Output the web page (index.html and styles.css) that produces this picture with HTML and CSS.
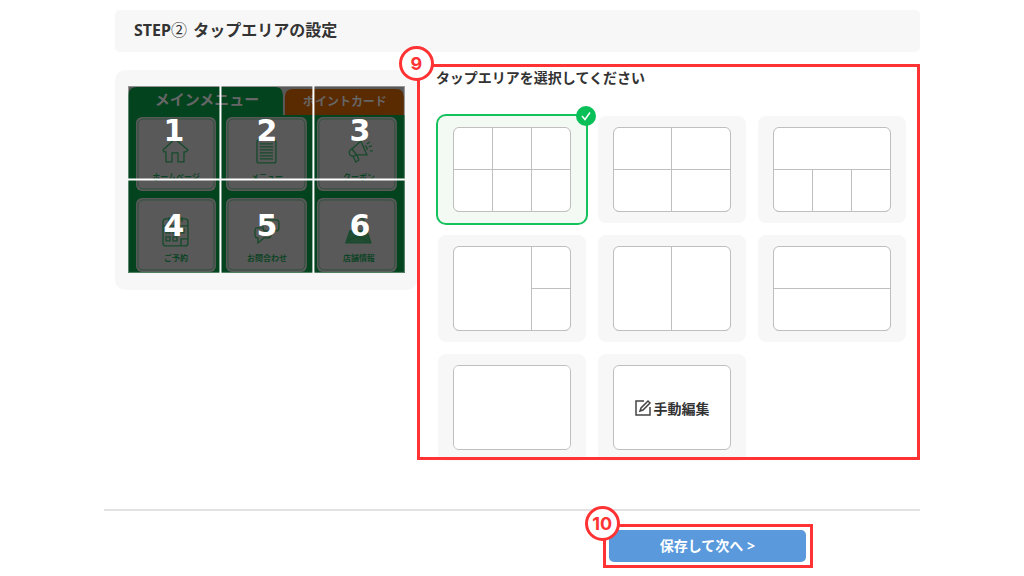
FILE: index.html
```html
<!DOCTYPE html>
<html lang="ja">
<head>
  <meta charset="UTF-8">
  <meta name="viewport" content="width=device-width, initial-scale=1">
  <title>タップエリアの設定</title>
  <link rel="stylesheet" href="styles.css">
</head>
<body>

<main>
  <h1 class="step-title">STEP<span class="step-number">②</span> タップエリアの設定</h1>

  <div class="columns">
    <!-- Menu preview with numbered areas -->
    <div class="preview">
      <svg viewBox="0 0 277 187" role="img" aria-label="リッチメニューのプレビュー">
        <rect width="277" height="187" fill="#595959"/>
        <path d="M0 187V9Q1 1 9 1H147Q155 1 155 9V29H277V187Z" fill="#03431e"/>
        <path d="M157 29V11Q157 3 165 3H268Q276 3 276 11V29Z" fill="#5a2a00"/>

        <g class="cards">
          <rect x="8" y="31" width="80" height="74" rx="6"/>
          <rect x="98" y="31" width="81" height="74" rx="6"/>
          <rect x="189" y="31" width="80" height="74" rx="6"/>
          <rect x="8" y="112" width="80" height="74" rx="6"/>
          <rect x="98" y="112" width="81" height="74" rx="6"/>
          <rect x="189" y="112" width="80" height="74" rx="6"/>
        </g>
        <g class="card-lines">
          <rect x="10" y="33" width="76" height="70" rx="5"/>
          <rect x="100" y="33" width="77" height="70" rx="5"/>
          <rect x="191" y="33" width="76" height="70" rx="5"/>
          <rect x="10" y="114" width="76" height="70" rx="5"/>
          <rect x="100" y="114" width="77" height="70" rx="5"/>
          <rect x="191" y="114" width="76" height="70" rx="5"/>
        </g>

        <g class="icons">
          <!-- home -->
          <path d="M35 64L47 53L60 64L58 66H56V76H50V67H44V76H38V66H36Z"/>
          <!-- list -->
          <rect x="129" y="54" width="19" height="23" rx="2"/>
          <path d="M132 58H145M132 61H145M132 64H145M132 67H145M132 70H145M132 73H145"/>
          <!-- megaphone -->
          <path d="M224 63L233 55L239 69L229 69M224 63A3.5 3.5 0 1 0 226 70L229 69ZM225 70L228 76L231 74L229 69M237 60A3 3 0 0 1 239 64M239 58L242 56M241 61L244 60M242 65H245"/>
          <!-- calendar -->
          <rect x="35" y="133" width="25" height="27" rx="3"/>
          <path d="M35 140H60M41 131V136M54 131V136M38 143H42V147H38ZM45 143H49V147H45ZM52 143H56V147H52ZM38 151H42V155H38ZM45 151H49V155H45ZM53 160V153H60"/>
          <!-- chat -->
          <path d="M134 142H129Q127 142 127 145V149Q127 152 130 152V157L136 152H140Q143 152 143 149M138 134H148Q151 134 151 137V142Q151 145 148 145H146L141 149V145H138Q135 145 135 142V137Q135 134 138 134Z"/>
          <!-- map -->
          <path d="M222 145H239L243 157H218Z" fill="#224b34"/>
          <path d="M220 155L229 150L240 155M230 152L225 143A7 7 0 1 1 236 143Z"/>
        </g>

        <text class="tab-main" x="79" y="19">メインメニュー</text>
        <text class="tab-sub" x="217" y="20">ポイントカード</text>
        <g class="captions">
          <text x="48" y="94">ホームページ</text>
          <text x="139" y="94">メニュー</text>
          <text x="231" y="94">クーポン</text>
          <text x="48" y="175">ご予約</text>
          <text x="139" y="175">お問合わせ</text>
          <text x="231" y="175">店舗情報</text>
        </g>

        <rect class="edge" x="0.5" y="0.5" width="276" height="186"/>
        <path class="divider" d="M92.5 0V187M185.5 0V187M0 93.5H277"/>
        <g class="numbers">
          <text x="46" y="55">1</text>
          <text x="139" y="55">2</text>
          <text x="232" y="55">3</text>
          <text x="46" y="150">4</text>
          <text x="139" y="150">5</text>
          <text x="232" y="150">6</text>
        </g>
      </svg>
    </div>

    <!-- Area layout picker -->
    <section class="picker callout">
      <span class="marker">9</span>
      <h2>タップエリアを選択してください</h2>
      <div class="tiles">
        <label class="tile">
          <input type="radio" name="layout" value="6" aria-label="6分割" checked>
          <span class="layout six"><i></i><i></i><i></i><i></i><i></i><i></i></span>
          <svg class="check" viewBox="0 0 20 20"><circle cx="10" cy="10" r="10"/><path d="M6 10L9 13.5L14 6.5"/></svg>
        </label>
        <label class="tile">
          <input type="radio" name="layout" value="4" aria-label="4分割">
          <span class="layout four"><i></i><i></i><i></i><i></i></span>
        </label>
        <label class="tile">
          <input type="radio" name="layout" value="1-3" aria-label="上1・下3分割">
          <span class="layout top-three"><i></i><i></i><i></i><i></i></span>
        </label>
        <label class="tile">
          <input type="radio" name="layout" value="1-2" aria-label="左1・右2分割">
          <span class="layout side-two"><i></i><i></i><i></i></span>
        </label>
        <label class="tile">
          <input type="radio" name="layout" value="2v" aria-label="左右2分割">
          <span class="layout halves"><i></i><i></i></span>
        </label>
        <label class="tile">
          <input type="radio" name="layout" value="2h" aria-label="上下2分割">
          <span class="layout rows"><i></i><i></i></span>
        </label>
        <label class="tile">
          <input type="radio" name="layout" value="1" aria-label="分割なし">
          <span class="layout"><i></i></span>
        </label>
        <div class="tile">
          <button type="button" class="manual">
            <svg viewBox="0 0 18 18"><path d="M10 2H2V16H16V8"/><path d="M6 12L7 9L14 2L16 4L9 11Z"/></svg>
            手動編集
          </button>
        </div>
      </div>
    </section>
  </div>
</main>

<footer>
  <div class="save callout">
    <span class="marker">10</span>
    <button type="button" class="next">保存して次へ &gt;</button>
  </div>
</footer>

</body>
</html>
```
FILE: styles.css
```css
* {
  box-sizing: border-box;
}

body {
  margin: 0;
  padding: 10px 104px 0;
  background: #fff;
  color: #333;
  font-family: "Noto Sans", "Noto Sans CJK JP", sans-serif;
}

button {
  font-family: inherit;
  font-size: 14px;
  font-weight: bold;
  cursor: pointer;
}

main {
  padding-left: 11px;
}

.step-title {
  margin: 0 0 12px;
  padding: 8px 19px 10px;
  border-radius: 5px;
  background: #f7f7f7;
  font-size: 16px;
  line-height: 24px;
}

.step-number {
  margin-right: 2px;
  font-weight: normal;
}

.columns {
  display: grid;
  grid-template-columns: 3fr 5fr;
  align-items: start;
}

/* Preview */
.preview {
  margin-top: 6px;
  padding: 16px 12px 17px 13px;
  border-radius: 10px;
  background: #f7f7f7;
}

.preview svg {
  display: block;
  width: 100%;
  font-family: "Noto Sans CJK JP", sans-serif;
  font-weight: bold;
  text-anchor: middle;
}

.cards {
  fill: #595959;
}

.card-lines,
.icons {
  fill: none;
  stroke: #2f4e3c;
  stroke-width: 1;
}

.icons {
  stroke: #174a2c;
  stroke-width: 1.3;
}

.tab-main {
  fill: #666;
  font-size: 15px;
}

.tab-sub {
  fill: #666;
  font-size: 12px;
}

.captions {
  fill: #0d4425;
  font-size: 8px;
}

.edge {
  fill: none;
  stroke: #fff;
  stroke-opacity: 0.35;
}

.divider {
  stroke: #fff;
  stroke-width: 2;
}

.numbers {
  fill: #fff;
  font-family: "DejaVu Sans", sans-serif;
  font-size: 30px;
}

/* Red frame with a numbered circle */
.callout {
  position: relative;
}

.callout::after {
  content: "";
  position: absolute;
  inset: 0;
  border: 3px solid #f33;
  pointer-events: none;
}

.marker {
  position: absolute;
  z-index: 1;
  top: -18px;
  left: -18px;
  width: 35px;
  height: 35px;
  border: 3px solid #f33;
  border-radius: 50%;
  background: #fff;
  color: #f33;
  font-family: Inter, sans-serif;
  font-size: 18px;
  font-weight: bold;
  line-height: 29px;
  text-align: center;
}

/* Picker */
.picker {
  padding: 4px 14px 0 21px;
}

.picker h2 {
  margin: 0 0 28px -2px;
  font-size: 14px;
  line-height: 20px;
}

.tiles {
  display: grid;
  grid-template-columns: repeat(3, 1fr);
  gap: 12px;
  margin-bottom: -1px;
}

.tile {
  position: relative;
  height: 107px;
  padding: 11px 15px;
  border-radius: 8px;
  background: #f7f7f7;
}

.tile input {
  position: absolute;
  inset: 0;
  width: 100%;
  height: 100%;
  margin: 0;
  appearance: none;
  cursor: pointer;
}

.tile:has(input:checked) {
  background: #f3faf3;
  box-shadow: 0 0 0 2px #14c25d;
}

.layout {
  display: grid;
  gap: 1px;
  height: 100%;
  border: 1px solid #bfbfbf;
  border-radius: 6px;
  background: #bfbfbf;
  overflow: hidden;
}

.layout i {
  background: #fff;
}

.six {
  grid-template: 1fr 1fr / 1fr 1fr 1fr;
}

.four {
  grid-template: 1fr 1fr / 1fr 1fr;
}

.top-three {
  grid-template: 1fr 1fr / 1fr 1fr 1fr;
}

.top-three i:first-child {
  grid-column: 1 / 4;
}

.side-two {
  grid-template: 1fr 1fr / 2fr 1fr;
}

.side-two i:first-child {
  grid-row: 1 / 3;
}

.halves {
  grid-template-columns: 1fr 1fr;
}

.rows {
  grid-template-rows: 1fr 1fr;
}

.check {
  position: absolute;
  top: -10px;
  right: -10px;
  width: 20px;
  height: 20px;
  fill: #09bf57;
}

.check path {
  fill: none;
  stroke: #fff;
  stroke-width: 1.5;
}

.manual {
  display: flex;
  align-items: center;
  justify-content: center;
  gap: 1px;
  width: 100%;
  height: 100%;
  padding: 0;
  border: 1px solid #bfbfbf;
  border-radius: 6px;
  background: #fff;
  color: #333;
}

.manual svg {
  width: 18px;
  height: 18px;
  fill: none;
  stroke: #444;
  stroke-width: 1.5;
}

/* Footer */
footer {
  display: flex;
  justify-content: flex-end;
  margin-top: 49px;
  padding: 13px 107px 0 0;
  border-top: 2px solid #e2e2e2;
}

.save {
  padding: 6px 7px 6px 6px;
}

.next {
  display: block;
  padding: 6px 51px;
  border: 0;
  border-radius: 5px;
  background: #5999dc;
  color: #fff;
  line-height: 20px;
}
```
